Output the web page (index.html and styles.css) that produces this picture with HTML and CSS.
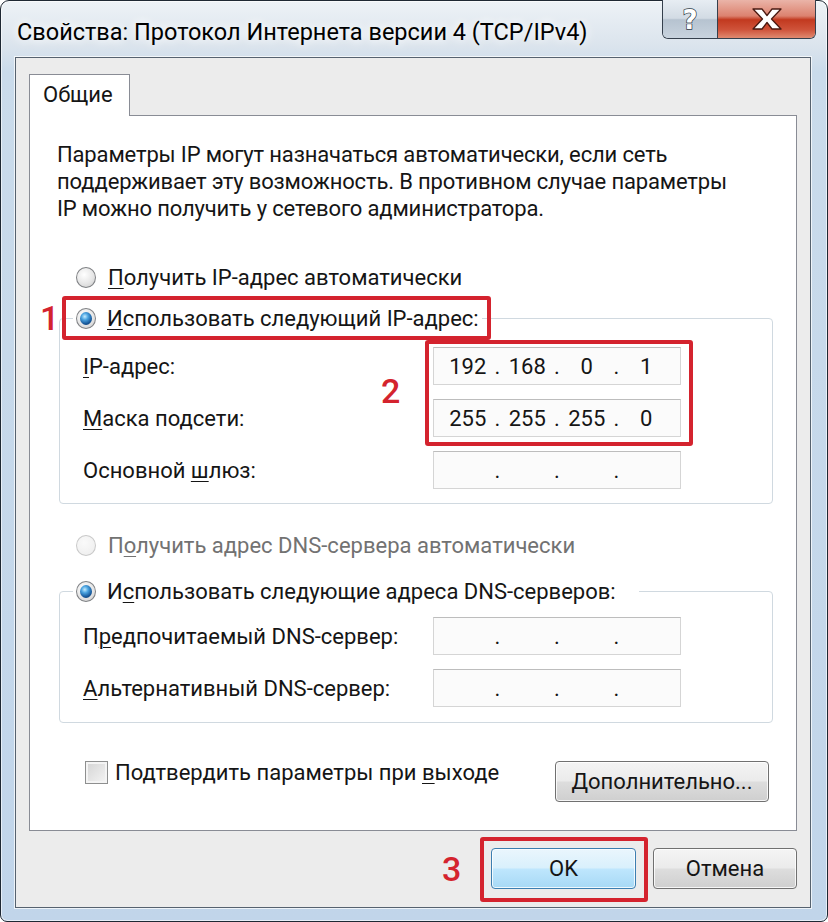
FILE: index.html
```html
<!DOCTYPE html>
<html lang="ru">
<head>
  <meta charset="UTF-8" />
  <title>Свойства: Протокол Интернета версии 4 (TCP/IPv4)</title>
  <link rel="stylesheet" href="styles.css">
</head>
<body>
  <div class="window">
    <div class="titlebar">
      <span class="title">Свойства: Протокол Интернета версии 4 (TCP/IPv4)</span>
      <div class="caption">
        <div class="cap-btn cap-help">
          <svg width="22" height="30" viewBox="0 0 22 30"><text x="11" y="25">?</text></svg>
        </div>
        <div class="cap-btn cap-close">
          <svg width="34" height="24" viewBox="0 0 34 24"><path d="M3 2h9l5 6.5 5-6.5h9l-9.5 10 9.5 10h-9l-5-6.5-5 6.5h-9l9.5-10z"/></svg>
        </div>
      </div>
    </div>

    <div class="client">
      <div class="tabs"><div class="tab">Общие</div></div>

      <div class="page">
        <p class="intro">Параметры IP могут назначаться автоматически, если сеть<br>поддерживает эту возможность. В противном случае параметры<br>IP можно получить у сетевого администратора.</p>

        <div class="option opt-ip-auto"><span class="radio"></span><span><u>П</u>олучить IP-адрес автоматически</span></div>

        <fieldset class="group group-ip">
          <legend>
            <span class="option"><span class="radio checked"></span><span><u>И</u>спользовать следующий IP-адрес:</span></span>
            <span class="mark mark-1"></span><span class="mark-num num-1">1</span>
          </legend>
          <div class="rows">
            <div class="field-row">
              <label><u>I</u>P-адрес:</label>
              <div class="ip"><span>192</span><i>.</i><span>168</span><i>.</i><span>0</span><i>.</i><span>1</span></div>
            </div>
            <div class="field-row">
              <label><u>М</u>аска подсети:</label>
              <div class="ip"><span>255</span><i>.</i><span>255</span><i>.</i><span>255</span><i>.</i><span>0</span></div>
            </div>
            <div class="field-row">
              <label>Основной <u>ш</u>люз:</label>
              <div class="ip"><span></span><i>.</i><span></span><i>.</i><span></span><i>.</i><span></span></div>
            </div>
            <span class="mark mark-2"></span><span class="mark-num num-2">2</span>
          </div>
        </fieldset>

        <div class="option opt-dns-auto disabled"><span class="radio"></span><span>П<u>о</u>лучить адрес DNS-сервера автоматически</span></div>

        <fieldset class="group group-dns">
          <legend>
            <span class="option"><span class="radio checked"></span><span>И<u>с</u>пользовать следующие адреса DNS-серверов:</span></span>
          </legend>
          <div class="rows">
            <div class="field-row">
              <label>П<u>р</u>едпочитаемый DNS-сервер:</label>
              <div class="ip"><span></span><i>.</i><span></span><i>.</i><span></span><i>.</i><span></span></div>
            </div>
            <div class="field-row">
              <label><u>А</u>льтернативный DNS-сервер:</label>
              <div class="ip"><span></span><i>.</i><span></span><i>.</i><span></span><i>.</i><span></span></div>
            </div>
          </div>
        </fieldset>

        <div class="bottom-row">
          <div class="check"><span class="checkbox"></span><span>Подтвердить параметры при <u>в</u>ыходе</span></div>
          <button class="btn btn-advanced"><u>Д</u>ополнительно...</button>
        </div>
      </div>

      <div class="dialog-buttons">
        <div class="ok-wrap">
          <button class="btn btn-default">OK</button>
          <span class="mark mark-3"></span><span class="mark-num num-3">3</span>
        </div>
        <button class="btn btn-cancel">Отмена</button>
      </div>
    </div>
  </div>
</body>
</html>
```

FILE: styles.css
```css
* { box-sizing: border-box; }

html, body { margin: 0; }

body {
  background: #fff;
  font-family: Roboto, "Liberation Sans", sans-serif;
  font-size: 22px;
  color: #151515;
}

u {
  text-decoration-thickness: 1px;
  text-underline-offset: 3px;
}

/* --- window frame --- */
.window {
  width: 828px;
  height: 922px;
  padding: 0 16px 13px 14px;
  border: 1px solid #1e2833;
  border-radius: 9px 9px 7px 7px;
  background: linear-gradient(180deg, #edf2f6 0, #dbe4ed 45px, #cadbeb 70px, #c1d5ea 100%);
  box-shadow: inset 0 0 0 1px rgba(255, 255, 255, 0.6);
  display: flex;
  flex-direction: column;
}
.titlebar {
  height: 56px;
  flex: none;
  display: flex;
  justify-content: space-between;
  align-items: flex-start;
}
.title {
  margin: 16px 0 0 2px;
  font-size: 23.5px;
  line-height: 30px;
  color: #000;
  text-shadow: 0 0 8px #fff, 0 0 14px #fff;
}
.caption {
  display: flex;
  margin: -1px -5px 0 0;
  border: 1px solid #35404d;
  border-top: none;
  border-radius: 0 0 6px 6px;
  overflow: hidden;
}
.cap-btn {
  height: 38px;
  display: flex;
  align-items: center;
  justify-content: center;
}
.cap-help {
  width: 55px;
  border-right: 1px solid #35404d;
  background: linear-gradient(180deg, #e7edf3 0, #d2dbe4 48%, #b6c3d0 52%, #c8d3de 100%);
}
.cap-help text {
  font: bold 26px "DejaVu Sans", sans-serif;
  text-anchor: middle;
  fill: #fff;
  stroke: #2d3946;
  stroke-width: 1.4px;
  paint-order: stroke;
}
.cap-close {
  width: 97px;
  background: linear-gradient(180deg, #eab4a8 0, #dc826f 42%, #c2391f 52%, #cf533a 78%, #e08a70 100%);
}
.cap-close path {
  fill: #fff;
  stroke: #4a1a12;
  stroke-width: 1.3px;
  stroke-linejoin: round;
}

.client {
  flex: 1;
  display: flex;
  flex-direction: column;
  padding: 16px 13px 0 13px;
  border: 1px solid #56626f;
  background: #ececec;
  box-shadow: 0 0 0 1px rgba(255, 255, 255, 0.7);
}

/* --- tab --- */
.tabs {
  display: flex;
  height: 41px;
}
.tab {
  position: relative;
  z-index: 1;
  width: 101px;
  height: 42px;
  padding-left: 13px;
  line-height: 40px;
  background: #fff;
  border: 1px solid #898c95;
  border-bottom: none;
}
.page {
  height: 716px;
  background: #fff;
  border: 1px solid #898c95;
}
.intro {
  margin: 0;
  padding: 25px 0 0 27px;
  line-height: 27px;
  letter-spacing: -0.15px;
  white-space: nowrap;
}

/* --- radios, groups --- */
.option {
  display: flex;
  align-items: center;
  gap: 12px;
  height: 30px;
  white-space: nowrap;
}
.opt-ip-auto,
.opt-dns-auto {
  padding-left: 46px;
}
.opt-ip-auto { margin-top: 40px; }
.opt-dns-auto { margin-top: 26px; }
.disabled { color: #727272; }

.radio {
  position: relative;
  flex: none;
  width: 20px;
  height: 21px;
  border: 1px solid #7f8184;
  border-radius: 50%;
  background: radial-gradient(circle at 40% 35%, #fff 0, #e6e6e6 55%, #c9c9c9 100%);
}
.disabled .radio {
  border-color: #c9c9c9;
  background: radial-gradient(circle at 40% 35%, #fafafa 0, #ececec 100%);
}
.radio.checked::after {
  content: "";
  position: absolute;
  inset: 3px;
  border-radius: 50%;
  background: radial-gradient(circle at 40% 35%, #c4ecff 0, #4aa3e0 30%, #17589a 65%, #0b2f59 100%);
}
.group legend .option { gap: 11px; }

.group {
  margin: 0 23px 0 29px;
  padding: 0;
  min-width: 0;
  border: 1px solid #d0d9e0;
  border-radius: 4px;
}
.group-ip { margin-top: 11px; }
.group-dns { margin-top: 16px; }
.group legend {
  position: relative;
  margin-left: 13px;
  padding: 0 3px;
}
.group-dns legend { padding-right: 23px; }

.rows {
  position: relative;
  display: flex;
  flex-direction: column;
  gap: 14px;
  padding: 14px 0 14px 23px;
}
.group-dns .rows {
  padding-top: 11px;
  padding-bottom: 15px;
}
.field-row {
  display: grid;
  grid-template-columns: 350px 248px;
  align-items: center;
}
.ip {
  display: flex;
  align-items: center;
  height: 38px;
  padding: 0 8px;
  background: #fbfbfb;
  border: 1px solid #d5d5d5;
  border-top-color: #bdbdbd;
}
.ip span {
  flex: 1;
  text-align: center;
}
.ip i {
  width: 8px;
  font-style: normal;
  text-align: center;
}

/* --- checkbox and buttons --- */
.bottom-row {
  display: flex;
  justify-content: space-between;
  align-items: flex-start;
  margin-top: 38px;
  padding: 0 27px 0 55px;
}
.check {
  display: flex;
  align-items: center;
  gap: 7px;
  height: 26px;
  margin-top: -2px;
  white-space: nowrap;
}
.checkbox {
  width: 23px;
  height: 23px;
  border: 1px solid #8e8f8f;
  background: linear-gradient(135deg, #d3d3d3, #f5f5f5);
  box-shadow: inset 0 0 0 2px #f4f4f4;
}
.btn {
  height: 41px;
  padding: 0;
  font: inherit;
  color: #151515;
  border: 1px solid #707070;
  border-radius: 4px;
  background: linear-gradient(180deg, #f4f4f4 0, #ebebeb 48%, #dddddd 52%, #cfcfcf 100%);
  box-shadow: inset 0 0 0 1px rgba(255, 255, 255, 0.8);
}
.btn-advanced { width: 214px; }
.btn-default {
  width: 145px;
  border-color: #3c7fb1;
  background: linear-gradient(180deg, #eaf6fd 0, #d9f0fc 48%, #bee6fd 52%, #a7d9f5 100%);
}
.btn-cancel { width: 144px; }
.dialog-buttons {
  display: flex;
  justify-content: flex-end;
  gap: 17px;
  margin-top: 17px;
}
.ok-wrap {
  position: relative;
  display: flex;
}

/* --- red annotation marks --- */
.mark {
  position: absolute;
  border: 4px solid #d4232e;
  border-radius: 3px;
}
.mark-num {
  position: absolute;
  color: #d4232e;
  font-size: 34px;
  font-weight: 500;
  line-height: 34px;
}
.mark-1 { left: -11px; top: -7px; width: 429px; height: 44px; }
.num-1 { left: -33px; top: -2px; }
.mark-2 { left: 365px; top: 7px; width: 268px; height: 106px; }
.num-2 { left: 321px; top: 41px; }
.mark-3 { left: -11px; top: -11px; width: 168px; height: 65px; }
.num-3 { left: -49px; top: 4px; }
```
